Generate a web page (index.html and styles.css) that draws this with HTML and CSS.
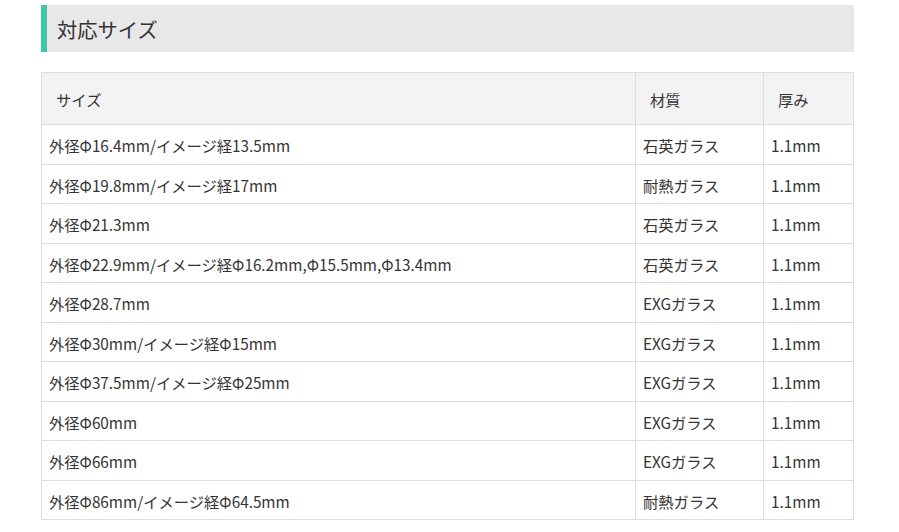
FILE: index.html
```html
<!DOCTYPE html>
<html lang="ja">
<head>
<meta charset="utf-8">
<link rel="stylesheet" href="styles.css">
</head>
<body>
<div class="wrap">
  <h2 class="heading">対応サイズ</h2>
  <table class="spec">
    <thead>
      <tr><th class="c1">サイズ</th><th class="c2">材質</th><th class="c3">厚み</th></tr>
    </thead>
    <tbody>
      <tr><td>外径Φ16.4mm/イメージ経13.5mm</td><td>石英ガラス</td><td>1.1mm</td></tr>
      <tr><td>外径Φ19.8mm/イメージ経17mm</td><td>耐熱ガラス</td><td>1.1mm</td></tr>
      <tr><td>外径Φ21.3mm</td><td>石英ガラス</td><td>1.1mm</td></tr>
      <tr><td>外径Φ22.9mm/イメージ経Φ16.2mm,Φ15.5mm,Φ13.4mm</td><td>石英ガラス</td><td>1.1mm</td></tr>
      <tr><td>外径Φ28.7mm</td><td>EXGガラス</td><td>1.1mm</td></tr>
      <tr><td>外径Φ30mm/イメージ経Φ15mm</td><td>EXGガラス</td><td>1.1mm</td></tr>
      <tr><td>外径Φ37.5mm/イメージ経Φ25mm</td><td>EXGガラス</td><td>1.1mm</td></tr>
      <tr><td>外径Φ60mm</td><td>EXGガラス</td><td>1.1mm</td></tr>
      <tr><td>外径Φ66mm</td><td>EXGガラス</td><td>1.1mm</td></tr>
      <tr><td>外径Φ86mm/イメージ経Φ64.5mm</td><td>耐熱ガラス</td><td>1.1mm</td></tr>
    </tbody>
  </table>
</div>
</body>
</html>
```
FILE: styles.css
```css
html, body {
  margin: 0;
  padding: 0;
  background: #fff;
}
body {
  font-family: "Noto Sans CJK JP", "Noto Sans", sans-serif;
  color: #333;
}
.wrap {
  width: 813px;
  margin-left: 41px;
  padding-top: 5px;
}
.heading {
  margin: 0;
  height: 47px;
  box-sizing: border-box;
  background: #e8e8e8;
  border-left: 6px solid #3cc8a8;
  padding-left: 10px;
  padding-top: 1px;
  font-size: 20.3px;
  font-weight: normal;
  line-height: 46px;
  color: #333;
}
.spec {
  margin-top: 20px;
  width: 812px;
  border-collapse: collapse;
  font-size: 15.3px;
  table-layout: fixed;
}
.spec th, .spec td {
  border: 1px solid #dddddd;
  text-align: left;
  font-weight: normal;
  box-sizing: border-box;
  white-space: nowrap;
}
.spec th {
  background: #f3f3f3;
  padding: 15px 14px 13px;
  height: 52px;
  line-height: 23px;
}
.spec td {
  padding: 9px 7px 7px;
  height: 39.5px;
  line-height: 22.5px;
}
.c1 { width: 594px; }
.c2 { width: 128px; }
.c3 { width: 90px; }
```
